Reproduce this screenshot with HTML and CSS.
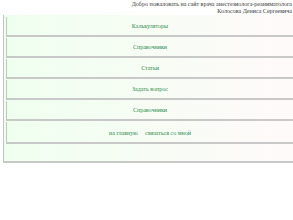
FILE: index.html
```
<!DOCTYPE html>
<html lang="ru">
<head>
  <meta charset="UTF-8" />
  <meta name="viewport" content="width=device-width, initial-scale=1.0"/>
  <title>Врач анестезиолог-реаниматолог</title>
  <link rel="stylesheet" href="styles.css">
</head>
<body>

<div class="top-title">
  Добро пожаловать на сайт врача анестезиолога-реаниматолога<br>
  Колосова Дениса Сергеевича
</div>

<div class="main-menu">
  <div class="menu-item"><a href="#">Калькуляторы</a></div>
  <div class="menu-item"><a href="#">Справочники</a></div>
  <div class="menu-item"><a href="#">Статьи</a></div>
  <div class="menu-item"><a href="#">Задать вопрос</a></div>
  <div class="menu-item"><a href="#">Справочники</a></div>
  <div class="menu-item nav-row">
    <a href="#">на главную</a>
    <a href="#">связаться со мной</a>
  </div>
</div>

</body>
</html>
```

FILE: styles.css
```
body {
  font-family: "Liberation Serif", serif;
  background: #fff;
  margin: 0;
}

.top-title {
  text-align: right;
  font-size: 6px;
  line-height: 7px;
  padding: 1px 1px 0 0;
  color: #3a3a3a;
  white-space: nowrap;
}

.main-menu {
  margin-left: 3px;
  border-left: 1px solid #c4c4c4;
  border-bottom: 2px solid #c8c8c8;
  padding: 1px 0 17px 2px;
  background: linear-gradient(to right, #efffef, #fffafa);
}

.menu-item {
  height: 18px;
  line-height: 18px;
  margin-top: 1px;
  border-left: 1px solid #c4c4c4;
  border-bottom: 2px solid #c8c8c8;
  background: linear-gradient(to right, #efffef, #fffafa);
  text-align: center;
  font-size: 6px;
}

.menu-item a {
  color: #2f8f4f;
  text-decoration: none;
}

.nav-row {
  height: 20px;
  line-height: 22px;
}

.nav-row a {
  margin: 0 3px;
}
```
